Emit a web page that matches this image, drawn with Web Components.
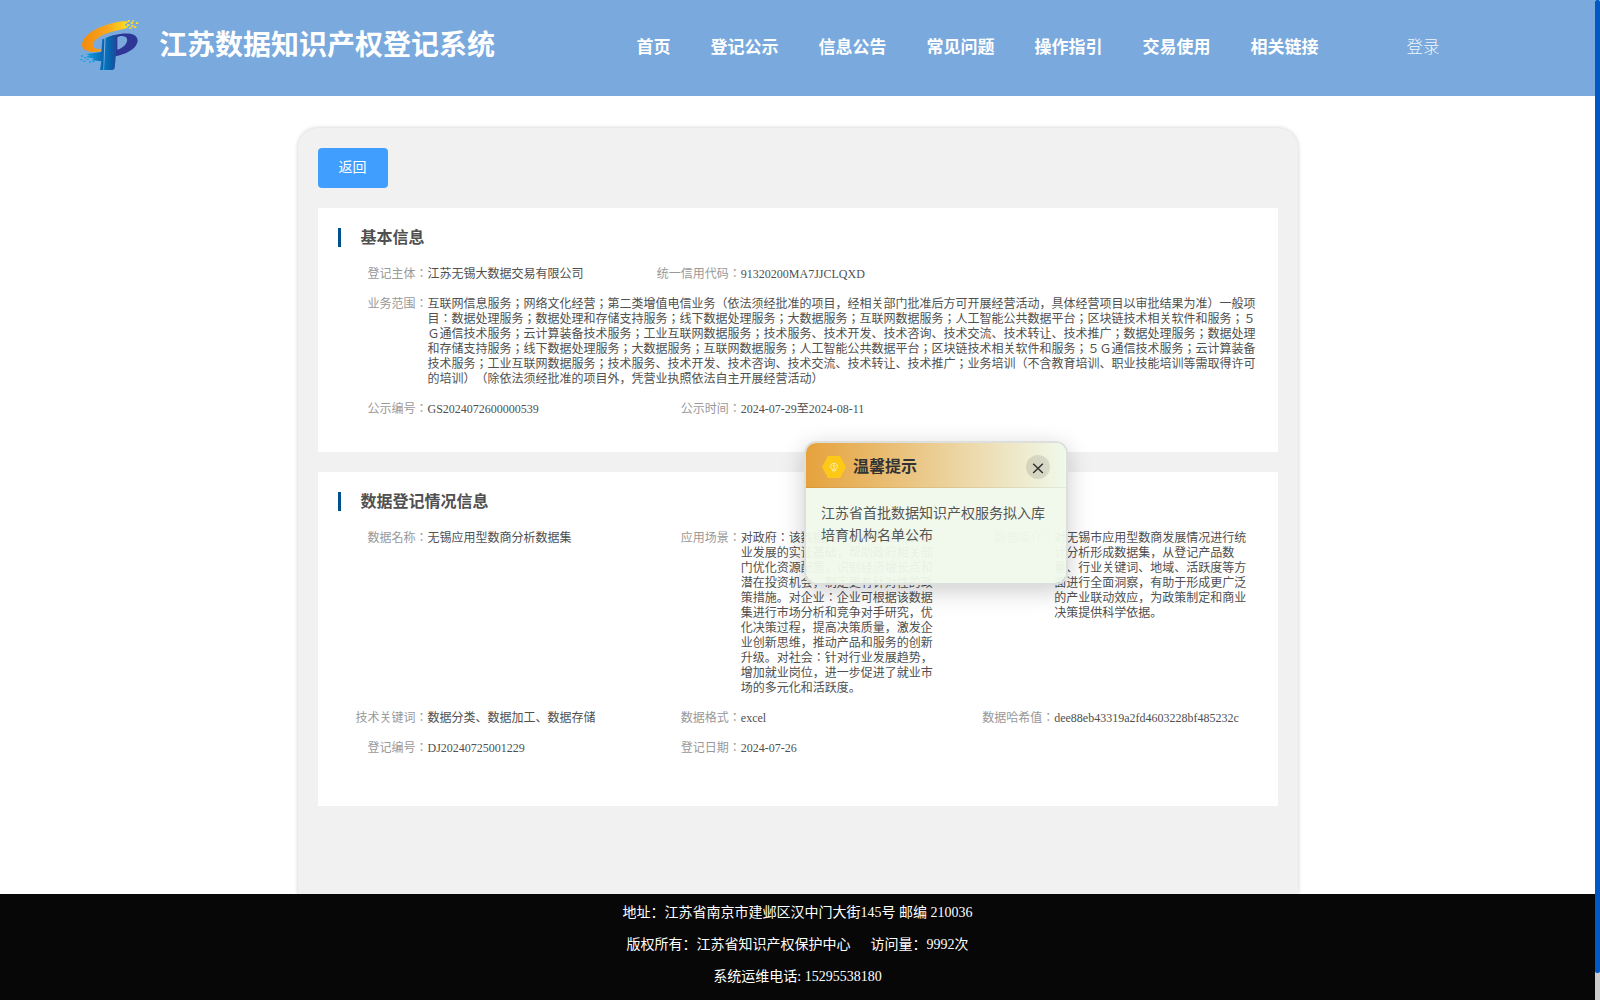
<!DOCTYPE html>
<html lang="zh-CN">
<head>
<meta charset="utf-8">
<title>江苏数据知识产权登记系统</title>
<style>
  body {
    margin: 0;
    height: 1000px;
    overflow: hidden;
    display: flex;
    font-family: "Liberation Serif", "Noto Sans CJK SC", serif;
    text-spacing-trim: space-all;
    background: #fff;
  }
  main {
    flex: 1;
    display: flex;
    flex-direction: column;
    min-width: 0;
  }
</style>
</head>
<body>
<main>
  <site-header name="江苏数据知识产权登记系统">
    <a>首页</a><a>登记公示</a><a>信息公告</a><a>常见问题</a><a>操作指引</a><a>交易使用</a><a>相关链接</a>
    <span slot="login">登录</span>
  </site-header>
  <detail-panel>
    <back-button>返回</back-button>
    <info-card heading="基本信息" style="height:244px">
      <info-item label="登记主体">江苏无锡大数据交易有限公司</info-item>
      <info-item label="统一信用代码" class="two">91320200MA7JJCLQXD</info-item>
      <info-item label="业务范围" class="full">互联网信息服务；网络文化经营；第二类增值电信业务（依法须经批准的项目，经相关部门批准后方可开展经营活动，具体经营项目以审批结果为准）一般项目：数据处理服务；数据处理和存储支持服务；线下数据处理服务；大数据服务；互联网数据服务；人工智能公共数据平台；区块链技术相关软件和服务；５Ｇ通信技术服务；云计算装备技术服务；工业互联网数据服务；技术服务、技术开发、技术咨询、技术交流、技术转让、技术推广；数据处理服务；数据处理和存储支持服务；线下数据处理服务；大数据服务；互联网数据服务；人工智能公共数据平台；区块链技术相关软件和服务；５Ｇ通信技术服务；云计算装备技术服务；工业互联网数据服务；技术服务、技术开发、技术咨询、技术交流、技术转让、技术推广；业务培训（不含教育培训、职业技能培训等需取得许可的培训）（除依法须经批准的项目外，凭营业执照依法自主开展经营活动）</info-item>
      <info-item label="公示编号">GS2024072600000539</info-item>
      <info-item label="公示时间" class="two">2024-07-29至2024-08-11</info-item>
    </info-card>
    <info-card heading="数据登记情况信息" style="height:334px">
      <info-item label="数据名称">无锡应用型数商分析数据集</info-item>
      <info-item label="应用场景">对政府：该数据集可以作为推动各行业发展的实证基础，帮助政府相关部门优化资源配置，识别经济增长点和潜在投资机会，制定更有针对性的政策措施。对企业：企业可根据该数据集进行市场分析和竞争对手研究，优化决策过程，提高决策质量，激发企业创新思维，推动产品和服务的创新升级。对社会：针对行业发展趋势，增加就业岗位，进一步促进了就业市场的多元化和活跃度。</info-item>
      <info-item label="数据简介">对无锡市应用型数商发展情况进行统计分析形成数据集，从登记产品数量、行业关键词、地域、活跃度等方面进行全面洞察，有助于形成更广泛的产业联动效应，为政策制定和商业决策提供科学依据。</info-item>
      <info-item label="技术关键词">数据分类、数据加工、数据存储</info-item>
      <info-item label="数据格式">excel</info-item>
      <info-item label="数据哈希值">dee88eb43319a2fd4603228bf485232c</info-item>
      <info-item label="登记编号">DJ20240725001229</info-item>
      <info-item label="登记日期">2024-07-26</info-item>
    </info-card>
  </detail-panel>
  <site-footer>
    <div>地址：江苏省南京市建邺区汉中门大街145号 邮编 210036</div>
    <div>版权所有：江苏省知识产权保护中心<span style="margin-left:20px">访问量：9992次</span></div>
    <div>系统运维电话: 15295538180</div>
  </site-footer>
</main>
<scroll-track></scroll-track>
<notice-popup heading="温馨提示">江苏省首批数据知识产权服务拟入库培育机构名单公布</notice-popup>

<script>
class SiteHeader extends HTMLElement {
  constructor() {
    super();
    this.attachShadow({ mode: 'open' });
    this.shadowRoot.innerHTML = `
      <style>
        :host {
          display: flex;
          flex: none;
          height: 96px;
          box-sizing: border-box;
          padding-left: 70px;
          background: #79a9dd;
          color: #fff;
        }
        svg { width: 80px; height: 70px; margin-top: 10px; flex: none; }
        h1 {
          width: 477.5px;
          margin: 0 0 0 9px;
          font-size: 28px;
          line-height: 92px;
          font-weight: 600;
          white-space: nowrap;
        }
        nav {
          display: flex;
          gap: 40px;
          font-size: 17px;
          line-height: 95px;
          font-weight: 600;
          white-space: nowrap;
        }
        .login {
          margin-left: 88px;
          font-size: 16.5px;
          line-height: 95px;
          font-weight: 300;
          opacity: .9;
        }
      </style>
      <svg viewBox="0 0 240 210">
        <defs>
          <linearGradient id="gold"><stop stop-color="#f28a0c"/><stop offset=".55" stop-color="#faa61f"/><stop offset="1" stop-color="#ffe11c"/></linearGradient>
          <linearGradient id="stem"><stop stop-color="#0878be"/><stop offset=".5" stop-color="#0861ac"/><stop offset="1" stop-color="#254497"/></linearGradient>
          <linearGradient id="tail"><stop stop-color="#12a2e4"/><stop offset="1" stop-color="#0862b2"/></linearGradient>
        </defs>
        <path fill="url(#gold)" d="M163 33C110 38 37 67 36 105C36 123 65 130 92 124L93 117C75 119 67 112 69 103C75 77 125 64 165 56L175 51L163 44L170 41Z"/>
        <g fill="#ffdf1c">
          <path d="M166 34h7v5h-7zM174 30h6v5h-6zM182 36h7v5h-7zM171 43h8v5h-8zM184 45h7v5h-7zM192 49h7v5h-7zM187 31h5v4h-5zM198 37h7v5h-7zM178 52h7v4h-7z"/>
        </g>
        <path fill="url(#tail)" d="M103 86L100 180H90L94 154L65 151L73 146L48 141L58 136L47 132L94 126L97 88Z"/>
        <g fill="#13a2e5">
          <path d="M33 136h6v4h-6zM42 141h6v4h-6zM31 147h6v4h-6zM50 146h6v4h-6zM40 152h6v4h-6zM57 154h6v4h-6zM67 152h6v5h-6z"/>
        </g>
        <path fill="#2f3796" fill-rule="evenodd" d="M106 86C130 71 202 58 203 91C202 119 163 134 136 139V82ZM142 82V119C161 113 174 99 171 86C168 77 153 75 142 82Z"/>
        <path fill="url(#stem)" d="M107 84Q123 76 142 75Q136 95 138 130L134 175Q132 180 126 180H102Z"/>
      </svg>
      <h1></h1>
      <nav><slot></slot></nav>
      <div class="login"><slot name="login"></slot></div>
      `;
  }

  connectedCallback() {
    this.shadowRoot.querySelector('h1').textContent = this.getAttribute('name');
  }
}

class DetailPanel extends HTMLElement {
  constructor() {
    super();
    this.attachShadow({ mode: 'open' });
    this.shadowRoot.innerHTML = `
      <style>
        :host {
          display: flex;
          flex-direction: column;
          align-items: flex-start;
          gap: 20px;
          width: 1000px;
          height: 766px;
          box-sizing: border-box;
          padding: 20px;
          margin: 32px auto 0;
          border-radius: 20px 20px 0 0;
          background: #f1f1f1;
          box-shadow: 0 0 4px rgba(0, 0, 0, .2);
        }
      </style>
      <slot></slot>
      `;
  }
}

class BackButton extends HTMLElement {
  constructor() {
    super();
    this.attachShadow({ mode: 'open' });
    this.shadowRoot.innerHTML = `
      <style>
        :host {
          display: block;
          width: 70px;
          height: 40px;
          border-radius: 4px;
          background: #409eff;
          color: #fff;
          font-size: 14px;
          line-height: 40px;
          text-align: center;
        }
      </style>
      <slot></slot>
      `;
  }
}

class InfoCard extends HTMLElement {
  constructor() {
    super();
    this.attachShadow({ mode: 'open' });
    this.shadowRoot.innerHTML = `
      <style>
        :host {
          display: block;
          width: 960px;
          box-sizing: border-box;
          padding: 20px 0 0 20px;
          background: #fff;
        }
        h2 {
          margin: 0;
          height: 19px;
          padding-left: 20px;
          border-left: 3px solid #00508e;
          color: #505050;
          font-size: 16px;
          line-height: 19px;
          font-weight: 700;
        }
        .grid {
          display: grid;
          grid-template-columns: repeat(3, 1fr);
          row-gap: 15px;
          margin-top: 20px;
        }
        ::slotted(.two) { grid-column: span 2; }
        ::slotted(.full) { grid-column: span 3; }
      </style>
      <h2></h2>
      <div class="grid"><slot></slot></div>
      `;
  }

  connectedCallback() {
    this.shadowRoot.querySelector('h2').textContent = this.getAttribute('heading');
  }
}

class InfoItem extends HTMLElement {
  constructor() {
    super();
    this.attachShadow({ mode: 'open' });
    // The JP face keeps the full-width colons centred
    this.shadowRoot.innerHTML = `
      <style>
        :host {
          display: flex;
          box-sizing: border-box;
          padding-right: 20px;
          font-family: "Liberation Serif", "Noto Sans CJK JP", serif;
          font-size: 12px;
          line-height: 15px;
          color: #505050;
        }
        .label {
          flex: none;
          width: 90px;
          text-align: right;
          white-space: nowrap;
          color: #999;
        }
        .value { flex: 1; min-width: 0; }
      </style>
      <div class="label"></div>
      <div class="value"><slot></slot></div>
      `;
  }

  connectedCallback() {
    this.lang = 'ja';
    this.shadowRoot.querySelector('.label').lang = 'ja';
    this.shadowRoot.querySelector('.label').textContent = this.getAttribute('label') + '：';
  }
}

class SiteFooter extends HTMLElement {
  constructor() {
    super();
    this.attachShadow({ mode: 'open' });
    this.shadowRoot.innerHTML = `
      <style>
        :host {
          display: block;
          flex: 1;
          padding-top: 3px;
          background: #070707;
          color: #fff;
          font-size: 14px;
          line-height: 32px;
          text-align: center;
        }
      </style>
      <slot></slot>
      `;
  }
}

class ScrollTrack extends HTMLElement {
  constructor() {
    super();
    this.attachShadow({ mode: 'open' });
    this.shadowRoot.innerHTML = `
      <style>
        :host { display: block; flex: none; width: 5px; height: 1000px; background: #ccc; }
        div { height: 973px; border-radius: 2px; background: #0058c4; }
      </style>
      <div></div>
      `;
  }
}

class NoticePopup extends HTMLElement {
  constructor() {
    super();
    this.attachShadow({ mode: 'open' });
    this.shadowRoot.innerHTML = `
      <style>
        :host {
          position: absolute;
          left: 804px;
          top: 441px;
          width: 264px;
          height: 144px;
          box-sizing: border-box;
          border: 2px solid #dcdfdc;
          border-radius: 12px;
          overflow: hidden;
          background: rgba(240, 249, 235, .95);
          background-clip: padding-box;
          box-shadow: 0 6px 24px rgba(0, 0, 0, .2);
        }
        header {
          display: flex;
          align-items: center;
          height: 45px;
          box-sizing: border-box;
          padding: 4px 16px 0;
          border-bottom: 1px solid rgba(0, 0, 0, .06);
          background: linear-gradient(90deg, #e6a23c, #f0f9eb);
        }
        .icon { width: 24px; height: 24px; }
        b {
          flex: 1;
          margin-left: 7px;
          font-size: 16px;
          line-height: 24px;
          color: #333;
        }
        .close { width: 24px; height: 24px; }
        .body {
          padding: 15px 16px 15px 15px;
          font-size: 14px;
          line-height: 22px;
          color: #555;
        }
      </style>
      <header>
        <svg class="icon" viewBox="0 0 24 24">
          <path fill="#fdc916" d="M6 1h12l6 11-6 11H6L0 12Z"/>
          <g fill="none" stroke="#fff0b5" stroke-width="1">
            <path d="M10.4 14.2C7.500 12.500 8 8.500 12 8.300c4 .2 4.500 4.200 1.600 5.900v1.600h-3.200zM10.500 10.700q1.500-1.500 3 0M12 11v4"/>
          </g>
        </svg>
        <b></b>
        <svg class="close" viewBox="0 0 24 24">
          <circle cx="12" cy="12" r="12" fill="#000" fill-opacity=".1"/>
          <path d="M7.200 8.800l9.600 9.200M16.800 8.800l-9.600 9.200" stroke="#333" stroke-width="1.500"/>
        </svg>
      </header>
      <div class="body"><slot></slot></div>
      `;
  }

  connectedCallback() {
    this.shadowRoot.querySelector('b').textContent = this.getAttribute('heading');
  }
}

customElements.define('site-header', SiteHeader);
customElements.define('detail-panel', DetailPanel);
customElements.define('back-button', BackButton);
customElements.define('info-card', InfoCard);
customElements.define('info-item', InfoItem);
customElements.define('site-footer', SiteFooter);
customElements.define('scroll-track', ScrollTrack);
customElements.define('notice-popup', NoticePopup);
</script>
</body>
</html>
